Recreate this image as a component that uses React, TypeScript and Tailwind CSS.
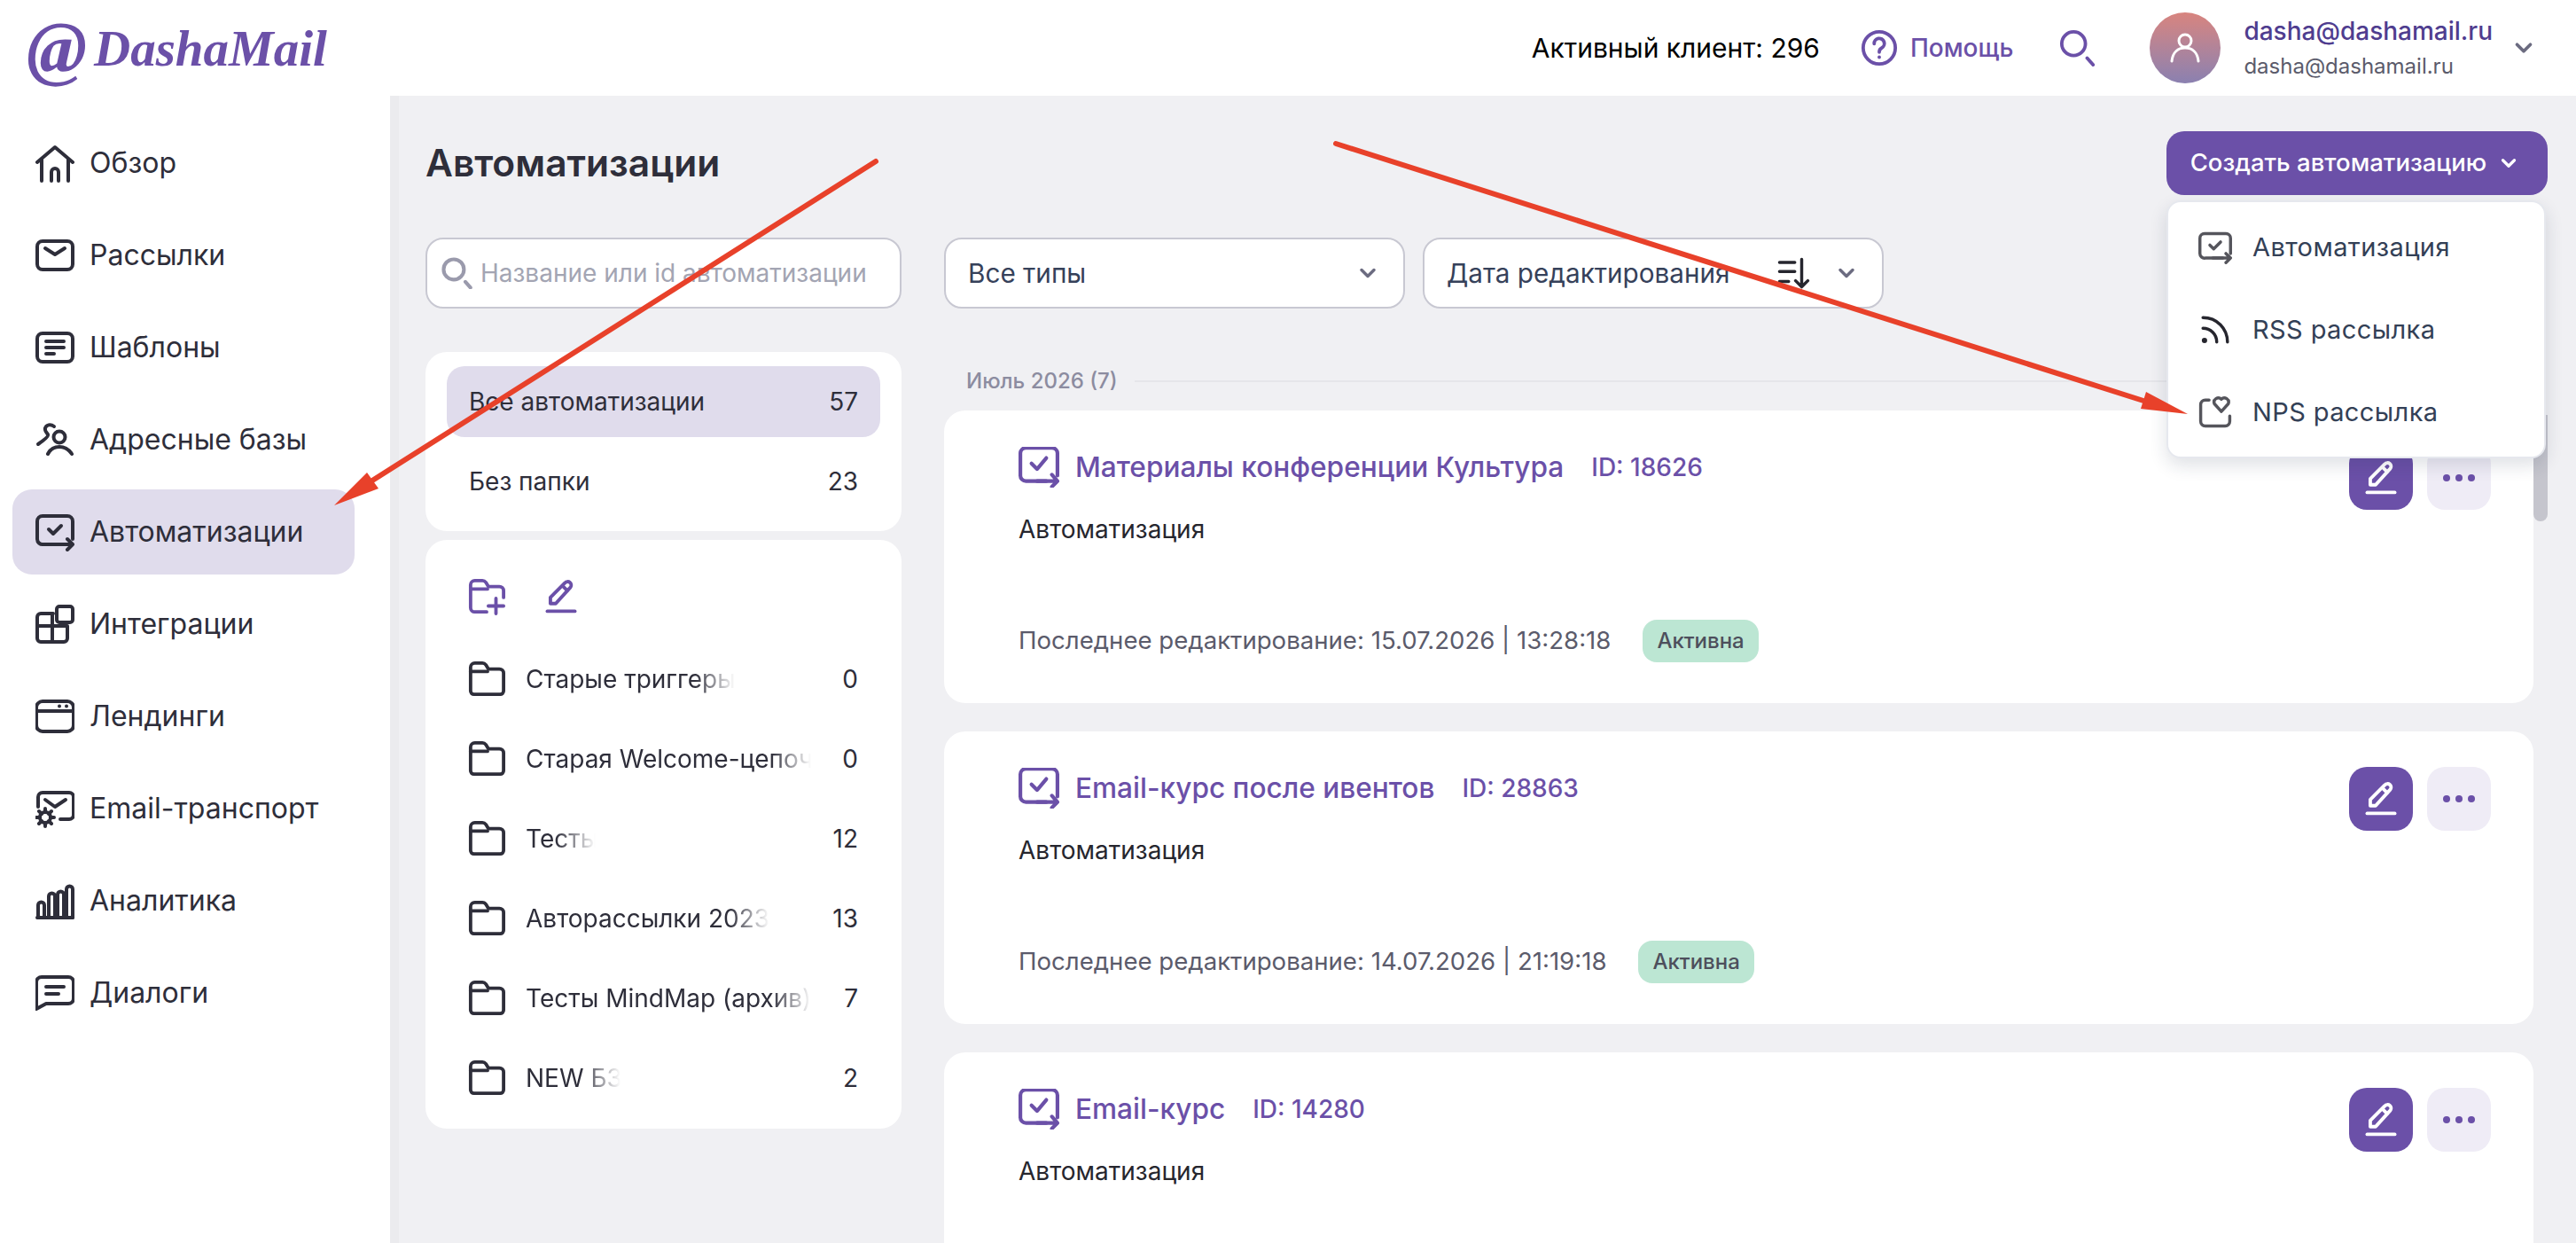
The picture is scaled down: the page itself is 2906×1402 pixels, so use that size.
import React from "react";
import { ChevronDown } from "lucide-react";

// All icons are hand drawn in a 44x44 box, stroke uses currentColor
const Icon = ({ name, className = "" }: { name: string; className?: string }) => {
  const paths: Record<string, React.ReactNode> = {
    home: (
      <>
        <path d="M2 21 22 4l20 17" />
        <path d="M7 18v24M37 18v24" />
        <path d="M18 42V32a4 4 0 0 1 8 0v10" />
      </>
    ),
    mail: (
      <>
        <rect x="2" y="6" width="40" height="32" rx="6" />
        <path d="m11 14 11 7 11-7" />
      </>
    ),
    template: (
      <>
        <rect x="2" y="6" width="40" height="32" rx="6" />
        <path d="M12 15h20M12 22h20M12 29h9" />
      </>
    ),
    users: (
      <>
        <circle cx="27" cy="19" r="6.500" />
        <path d="M14 38c3-6 8-8 13-8s10 2 14 8" />
        <path d="M21 7c-4-3-9-2-10 2-1 3 2 5 3 7s-4 6-11 11" />
      </>
    ),
    automation: (
      <>
        <path d="M32 36H9a6 6 0 0 1-7-6V10a6 6 0 0 1 6-6h28a6 6 0 0 1 6 6v20" />
        <path d="m15 19 5 5 9-9" />
        <path d="M19 36h23M36 30l6 6-6 6" />
      </>
    ),
    automationTall: (
      <>
        <path d="M30 37H8a6 6 0 0 1-6-6V7a6 6 0 0 1 6-6h28a6 6 0 0 1 6 6v24" />
        <path d="m14 18 6 6 10-12" />
        <path d="M20 37h22M36 30l6 7-6 6" />
      </>
    ),
    integrations: (
      <>
        <rect x="24" y="2" width="18" height="18" rx="3" />
        <path d="M20 10H6a4 4 0 0 0-4 4v24a4 4 0 0 0 4 4h26a4 4 0 0 0 4-4V24H2M19 12v30" />
      </>
    ),
    landing: (
      <>
        <rect x="1" y="5" width="42" height="34" rx="7" />
        <path d="M1 16h42" />
        <path d="M27 10.500h.01M35 10.500h.01" />
      </>
    ),
    transport: (
      <>
        <path d="M3 20V9a5 5 0 0 1 5-5h30a5 5 0 0 1 5 5v20a5 5 0 0 1-5 5H28" />
        <path d="m11 12 11 8 12-8" />
        <circle cx="11" cy="32" r="6" />
        <path d="M11 22v4M11 38v4M1 32h4M17 32h4M4 25l3 3M15 36l3 3M18 25l-3 3M7 36l-3 3" />
      </>
    ),
    analytics: (
      <>
        <path d="M2 41h40" />
        <path d="M3 41V27a3.500 3.500 0 0 1 7 0v14M15 41V17a3.500 3.500 0 0 1 7 0v24M25 41V15a3.500 3.500 0 0 1 7 0v26M35 41V9a3.500 3.500 0 0 1 7 0v32" />
      </>
    ),
    dialog: (
      <>
        <path d="M1 40V10a6 6 0 0 1 6-6h30a6 6 0 0 1 6 6v18a6 6 0 0 1-6 6H12Z" />
        <path d="M12 15h20M12 23h14" />
      </>
    ),
    folder: (
      <>
        <path d="M3 36V8a5 5 0 0 1 5-5h9a5 5 0 0 1 4 2l3 5h13a5 5 0 0 1 5 5v21a4 4 0 0 1-4 4H7a4 4 0 0 1-4-4Z" />
        <path d="M3 13h20" />
      </>
    ),
    folderPlus: (
      <>
        <path d="M22 40H8a5 5 0 0 1-5-5V8a5 5 0 0 1 5-5h9a5 5 0 0 1 4 2l3 5h13a5 5 0 0 1 5 5v8" />
        <path d="M3 13h20M33 24v18M24 33h18" />
      </>
    ),
    pencil: (
      <>
        <path d="M8 31v-8L27 4a4.500 4.500 0 0 1 7 6L15 31Z" />
        <path d="m24 8 6 6" />
        <path d="M4 41h36" />
      </>
    ),
    help: (
      <>
        <circle cx="22" cy="22" r="19" />
        <path d="M16 17a6 6 0 1 1 9 5c-2 1-3 2-3 5" />
        <path d="M22 33v.01" />
      </>
    ),
    search: (
      <>
        <circle cx="17" cy="17" r="14" />
        <path d="m33 34 7 8" />
      </>
    ),
    rss: (
      <>
        <path d="M6 6c18 0 32 14 32 32M6 20c10 0 18 8 18 18" />
        <circle cx="8" cy="36" r="3.500" fill="currentColor" stroke="none" />
      </>
    ),
    nps: (
      <>
        <path d="M14 6H9a6 6 0 0 0-6 6v22a6 6 0 0 0 6 6h26a6 6 0 0 0 6-6v-7" />
        <path d="M30 21 21 11a5.500 5.500 0 0 1 9-6 5.500 5.500 0 0 1 9 6Z" />
      </>
    ),
    sort: (
      <>
        <path d="M4 8h20M4 20h20M4 33h12" />
        <path d="M33 4v36M25 32l8 8 8-8" />
      </>
    ),
  };
  return (
    <svg
      viewBox="0 0 44 44"
      fill="none"
      stroke="currentColor"
      strokeWidth="4"
      strokeLinecap="round"
      strokeLinejoin="round"
      className={className}
    >
      {paths[name]}
    </svg>
  );
};

const navItems = [
  { icon: "home", label: "Обзор" },
  { icon: "mail", label: "Рассылки" },
  { icon: "template", label: "Шаблоны" },
  { icon: "users", label: "Адресные базы" },
  { icon: "automation", label: "Автоматизации", active: true },
  { icon: "integrations", label: "Интеграции" },
  { icon: "landing", label: "Лендинги" },
  { icon: "transport", label: "Email-транспорт" },
  { icon: "analytics", label: "Аналитика" },
  { icon: "dialog", label: "Диалоги" },
];

const folders = [
  { name: "Старые триггеры", count: 0, width: "w-[236px]" },
  { name: "Старая Welcome-цепочка", count: 0, width: "w-[322px]" },
  { name: "Тесты", count: 12, width: "w-[79px]" },
  { name: "Авторассылки 2023", count: 13, width: "w-[275px]" },
  { name: "Тесты MindMap (архив)", count: 7, width: "w-[322px]" },
  { name: "NEW БЗ", count: 2, width: "w-[107px]" },
];

const cards = [
  { title: "Материалы конференции Культура", id: "18626", date: "15.07.2026 | 13:28:18" },
  { title: "Email-курс после ивентов", id: "28863", date: "14.07.2026 | 21:19:18" },
  { title: "Email-курс", id: "14280", date: "12.07.2026 | 10:02:41" },
];

const Sidebar = () => (
  <aside className="w-[450px] shrink-0 bg-white border-r-[10px] border-[#ebebee] pt-[28px] pl-[14px]">
    {navItems.map((item) => (
      <div
        key={item.label}
        className={`flex items-center h-[96px] mb-[8px] w-[386px] pl-[26px] rounded-[22px] gap-[17px] text-[#2e2e3a] ${
          item.active ? "bg-[#e0dcec]" : ""
        }`}
      >
        <Icon name={item.icon} className="w-[44px] h-[44px] shrink-0" />
        <span className="text-[32px]">{item.label}</span>
      </div>
    ))}
  </aside>
);

const Header = () => (
  <header className="h-[108px] shrink-0 bg-white flex items-center pl-[30px] pr-[44px]">
    <div className="flex items-center text-[#6b50a8] font-[family-name:'Liberation_Serif',serif] font-bold italic">
      <span className="text-[82px] leading-none w-[76px]">@</span>
      <span className="text-[57px] leading-none">DashaMail</span>
    </div>
    <div className="ml-auto flex items-center">
      <span className="text-[30px] text-black">Активный клиент: 296</span>
      <Icon name="help" className="w-[42px] h-[42px] ml-[46px] text-[#6b50a8]" />
      <span className="text-[28px] font-medium text-[#6b50a8] ml-[14px]">Помощь</span>
      <Icon name="search" className="w-[42px] h-[42px] ml-[52px] text-[#6b50a8]" />
      <div className="w-[80px] h-[80px] rounded-full ml-[60px] flex items-center justify-center bg-gradient-to-b from-[#d8847e] to-[#8a80b0]">
        <svg viewBox="0 0 44 44" fill="none" stroke="white" strokeWidth="3" strokeLinecap="round" className="w-[44px] h-[44px]">
          <circle cx="22" cy="14" r="7" />
          <path d="M7 37c1-10 7-15 15-15s14 5 15 15" />
        </svg>
      </div>
      <div className="ml-[26px] flex flex-col gap-[6px] leading-none">
        <span className="text-[28px] font-medium text-[#4f3d8f] leading-[36px]">dasha@dashamail.ru</span>
        <span className="text-[24px] text-[#5b5b6b] leading-[32px]">dasha@dashamail.ru</span>
      </div>
      <ChevronDown className="w-[30px] h-[30px] ml-[20px] text-[#6b6b80]" strokeWidth={3} />
    </div>
  </header>
);

const Dropdown = () => (
  <div className="absolute top-[78px] right-[2px] w-[428px] h-[291px] z-20 bg-white rounded-[16px] border-2 border-[#e6e8ee] shadow-[0_8px_20px_rgba(30,40,70,0.14)] flex flex-col justify-center text-[#334056]">
    {[
      { icon: "automation", label: "Автоматизация" },
      { icon: "rss", label: "RSS рассылка" },
      { icon: "nps", label: "NPS рассылка" },
    ].map((row) => (
      <div key={row.label} className="flex items-center h-[93px] pl-[34px]">
        <Icon name={row.icon} className={`w-[38px] h-[38px] ${row.icon === "rss" ? "text-[#26262e]" : "text-[#55555c]"}`} />
        <span className="ml-[23px] text-[29px] tracking-[0.4px]">{row.label}</span>
      </div>
    ))}
  </div>
);

const Folders = () => (
  <>
    <div className="bg-white rounded-[24px] mt-[49px] h-[202px] px-[24px] pt-[16px]">
      <div className="h-[80px] rounded-[20px] bg-[#e0dcec] flex items-center justify-between px-[25px] text-[#2e2e3a] text-[28px]">
        <span>Все автоматизации</span>
        <span>57</span>
      </div>
      <div className="h-[100px] flex items-center justify-between px-[25px] text-[#2e2e3a] text-[28px]">
        <span>Без папки</span>
        <span>23</span>
      </div>
    </div>
    <div className="bg-white rounded-[24px] mt-[10px] h-[664px] pl-[48px] pr-[49px] pt-[43px]">
      <div className="flex items-center gap-[44px] text-[#6b50a8]">
        <Icon name="folderPlus" className="w-[42px] h-[42px]" />
        <Icon name="pencil" className="w-[38px] h-[38px] [stroke-width:4.5]" />
      </div>
      <div className="mt-[27px] flex flex-col">
        {folders.map((f) => (
          <div key={f.name} className="h-[90px] flex items-center justify-between text-[#2e2e3a] text-[28px]">
            <div className="flex items-center gap-[23px]">
              <Icon name="folder" className="w-[42px] h-[42px] shrink-0" />
              <span
                className={`${f.width} block overflow-hidden whitespace-nowrap [mask-image:linear-gradient(to_right,black_calc(100%-45px),transparent)]`}
              >
                {f.name}
              </span>
            </div>
            <span>{f.count}</span>
          </div>
        ))}
      </div>
    </div>
  </>
);

const Card = ({ title, id, date }: { title: string; id: string; date: string }) => (
  <div className="bg-white rounded-[24px] h-[330px] shrink-0 flex justify-between pt-[40px] pl-[84px] pr-[48px]">
    <div className="flex flex-col">
      <div className="flex items-center h-[48px] text-[#6b50a8]">
        <Icon name="automationTall" className="w-[46px] h-[46px]" />
        <span className="ml-[18px] text-[31.600px] font-medium">{title}</span>
        <span className="ml-[31px] text-[28px] font-medium">ID: {id}</span>
      </div>
      <div className="mt-[26px] h-[40px] flex items-center text-[28px] text-[#26262e]">Автоматизация</div>
      <div className="mt-[82px] flex items-center">
        <span className="text-[27.600px] text-[#5b5b6b]">Последнее редактирование: {date}</span>
        <span className="ml-[36px] h-[48px] px-[16px] rounded-[16px] bg-[#bce6d3] text-[#4d4f5c] text-[24px] font-medium flex items-center">
          Активна
        </span>
      </div>
    </div>
    <div className="flex gap-[16px]">
      <button className="w-[72px] h-[72px] rounded-[20px] bg-[#6b50a8] flex items-center justify-center text-white">
        <Icon name="pencil" className="w-[38px] h-[38px] [stroke-width:4.5]" />
      </button>
      <button className="w-[72px] h-[72px] rounded-[20px] bg-[#efecf6] flex items-center justify-center gap-[6px]">
        <span className="w-[8px] h-[8px] rounded-full bg-[#6b50a8]" />
        <span className="w-[8px] h-[8px] rounded-full bg-[#6b50a8]" />
        <span className="w-[8px] h-[8px] rounded-full bg-[#6b50a8]" />
      </button>
    </div>
  </div>
);

const Arrows = () => (
  <svg viewBox="0 0 2906 1402" className="absolute inset-0 w-[2906px] h-[1402px] z-30 pointer-events-none">
    <path d="M988 182 420 542" stroke="#e8412a" strokeWidth="6" strokeLinecap="round" />
    <polygon points="377,570 414,533 427,551" fill="#e8412a" />
    <path d="M1507 162 2418 452" stroke="#e8412a" strokeWidth="6" strokeLinecap="round" />
    <polygon points="2468,467 2421,442 2415,461" fill="#e8412a" />
  </svg>
);

export default function App() {
  return (
    <div className="relative w-[2906px] h-[1402px] overflow-hidden flex flex-col bg-[#f0f0f3] font-[family-name:Inter,sans-serif]">
      <Header />
      <div className="flex flex-1 min-h-0">
        <Sidebar />
        <main className="flex-1 min-w-0 pl-[30px] pr-[32px] pt-[40px]">
          <div className="relative flex items-center justify-between h-[72px]">
            <h1 className="text-[42.500px] font-semibold text-[#2e2e3a]">Автоматизации</h1>
            <button className="h-[72px] w-[430px] pr-[4px] rounded-[20px] bg-[#6b50a8] text-white text-[27.500px] font-medium flex items-center justify-center gap-[12px]">
              Создать автоматизацию
              <ChevronDown className="w-[26px] h-[26px]" strokeWidth={3} />
            </button>
            <Dropdown />
          </div>
          <div className="flex mt-[48px] gap-[48px]">
            <div className="w-[537px] shrink-0">
              <div className="h-[80px] rounded-[20px] bg-white border-2 border-[#c8c8d2] flex items-center pl-[16px]">
                <Icon name="search" className="w-[36px] h-[36px] text-[#9a9aac] [stroke-width:5]" />
                <span className="ml-[8px] text-[28px] text-[#a3a5b3]">Название или id автоматизации</span>
              </div>
              <Folders />
            </div>
            <div className="flex-1 min-w-0 relative">
              <div className="flex gap-[20px]">
                <div className="w-[520px] h-[80px] rounded-[20px] bg-white border-2 border-[#c8c8d2] flex items-center justify-between pl-[25px] pr-[26px] text-[#36415a] text-[29.700px]">
                  <span>Все типы</span>
                  <ChevronDown className="w-[28px] h-[28px] text-[#6b6b80]" strokeWidth={3} />
                </div>
                <div className="w-[520px] h-[80px] rounded-[20px] bg-white border-2 border-[#c8c8d2] flex items-center pl-[25px] pr-[26px] text-[#36415a] text-[29.700px]">
                  <span>Дата редактирования</span>
                  <Icon name="sort" className="w-[38px] h-[38px] ml-[52px] text-[#26262e]" />
                  <ChevronDown className="w-[28px] h-[28px] ml-auto text-[#6b6b80]" strokeWidth={3} />
                </div>
              </div>
              <div className="mt-[49px] pr-[16px]">
                <div className="h-[66px] flex items-center pl-[25px] gap-[19px]">
                  <span className="text-[24px] font-medium text-[#8c8ca0]">Июль 2026 (7)</span>
                  <span className="flex-1 h-[2px] bg-[#e6e6ea]" />
                </div>
                <div className="flex flex-col gap-[32px]">
                  {cards.map((c) => (
                    <Card key={c.id} {...c} />
                  ))}
                </div>
              </div>
              <div className="absolute right-0 top-[200px] w-[16px] h-[120px] rounded-b-[8px] bg-[#c5c5cd]" />
            </div>
          </div>
        </main>
      </div>
      <Arrows />
    </div>
  );
}
